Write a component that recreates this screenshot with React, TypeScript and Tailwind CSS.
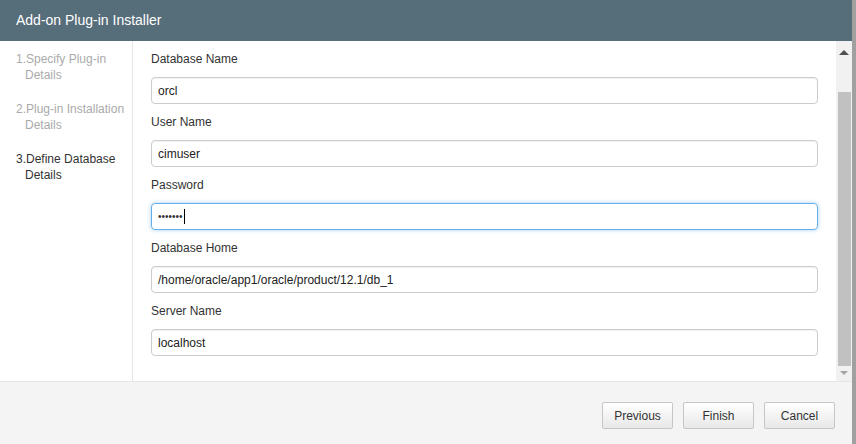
import React from "react"

const steps = [
  { num: "1.", first: "Specify Plug-in", rest: "Details", done: true },
  { num: "2.", first: "Plug-in Installation", rest: "Details", done: true },
  { num: "3.", first: "Define Database", rest: "Details", done: false },
]

const fields = [
  { label: "Database Name", value: "orcl" },
  { label: "User Name", value: "cimuser" },
  { label: "Password", value: "•••••••", focused: true },
  { label: "Database Home", value: "/home/oracle/app1/oracle/product/12.1/db_1" },
  { label: "Server Name", value: "localhost" },
]

function Scrollbar() {
  return (
    <div className="w-[16px] bg-[#f1f1f1] flex flex-col items-center shrink-0">
      <div className="h-[18px] w-full flex items-center justify-center mt-[2px]">
        <div className="w-0 h-0 border-l-[5px] border-r-[5px] border-b-[5px] border-l-transparent border-r-transparent border-b-[#505050]" />
      </div>
      <div className="mt-[31px] w-[13px] h-[274px] bg-[#c1c1c1]" />
      <div className="h-[14px] w-full flex items-center justify-center">
        <div className="w-0 h-0 border-l-[4px] border-r-[4px] border-t-[4px] border-l-transparent border-r-transparent border-t-[#a3a3a3]" />
      </div>
    </div>
  )
}

function FooterButton({ children }: { children: React.ReactNode }) {
  return (
    <button className="w-[71px] h-[27px] rounded-[2px] border border-[#c6c6c6] bg-gradient-to-b from-white to-[#e8e8e8] text-[12px] text-[#333]">
      {children}
    </button>
  )
}

export default function App() {
  return (
    <div
      className="flex w-[856px] h-[444px] bg-[#9e9e9e] overflow-hidden"
      style={{ fontFamily: '"Liberation Sans", Arial, sans-serif' }}
    >
      <div className="w-[852px] h-full flex flex-col bg-white">
        <div className="h-[41px] bg-[#566d7a] flex items-center px-[16px] shrink-0">
          <span className="text-white text-[14px]">Add-on Plug-in Installer</span>
        </div>

        <div className="flex h-[340px] shrink-0">
          <aside className="w-[133px] border-r border-[#e6e6e6] pt-[10px] pl-[16px] flex flex-col gap-[18px] shrink-0">
            {steps.map((s) => (
              <div key={s.num} className={`text-[12px] leading-[16px] ${s.done ? "text-[#aaaaaa]" : "text-[#333]"}`}>
                <div>{s.num}{s.first}</div>
                <div className="pl-[9px]">{s.rest}</div>
              </div>
            ))}
          </aside>

          <main className="flex-1 flex overflow-hidden">
            <div className="flex-1 pl-[18px] pr-[18px] pt-[9px] flex flex-col">
              {fields.map((f) => (
                <div key={f.label} className="flex flex-col mb-[9px]">
                  <label className="text-[12px] leading-[18px] text-[#333] mb-[9px]">{f.label}</label>
                  <div
                    className={`h-[27px] rounded-[4px] border px-[6px] flex items-center text-[12px] text-[#222] ${
                      f.focused
                        ? "border-[#66afe9] shadow-[0_0_4px_rgba(102,175,233,0.6)]"
                        : "border-[#cccccc] shadow-[inset_0_1px_1px_rgba(0,0,0,0.06)]"
                    }`}
                  >
                    {f.focused ? (
                      <>
                        <span className="text-[10px] leading-none text-[#333]">{f.value}</span>
                        <span className="w-px h-[15px] bg-black ml-[1px]" />
                      </>
                    ) : (
                      f.value
                    )}
                  </div>
                </div>
              ))}
            </div>
            <Scrollbar />
          </main>
        </div>

        <footer className="flex-1 bg-[#f4f4f4] border-t border-[#e6e6e6] flex items-start justify-end gap-[10px] pt-[20px] pr-[17px]">
          <FooterButton>Previous</FooterButton>
          <FooterButton>Finish</FooterButton>
          <FooterButton>Cancel</FooterButton>
        </footer>
      </div>
      <div className="w-[4px] h-full bg-[#a0a0a0]" />
    </div>
  )
}
